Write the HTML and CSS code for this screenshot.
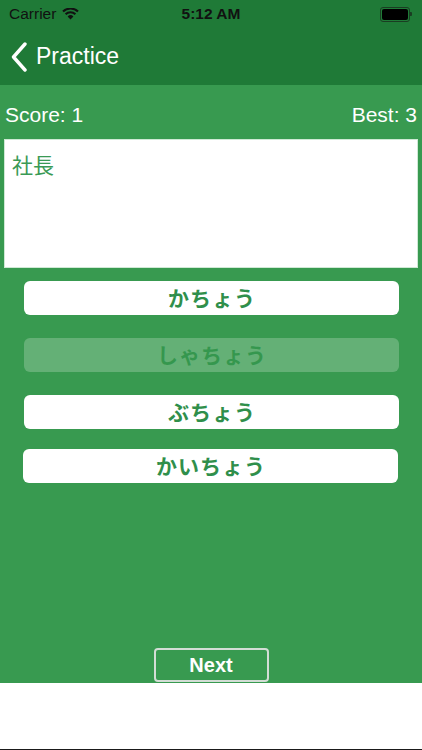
FILE: index.html
```html
<!DOCTYPE html>
<html lang="ja">
<head>
    <meta charset="UTF-8">
    <meta name="viewport" content="width=device-width, initial-scale=1.0">
    <title>Practice</title>
    <link rel="stylesheet" href="styles.css">
</head>
<body>
    <div class="screen">
        <div class="header">
            <div class="status-bar">
                <div class="carrier">
                    Carrier
                    <svg class="wifi" width="17" height="12" viewBox="0 0 17 12">
                        <path d="M8.5 11.5 L5.6 8.4 A4.2 4.2 0 0 1 11.4 8.4 Z" fill="#111"/>
                        <path d="M3.6 6.3 A7 7 0 0 1 13.4 6.3" fill="none" stroke="#111" stroke-width="2.1"/>
                        <path d="M1 3.6 A10.8 10.8 0 0 1 16 3.6" fill="none" stroke="#111" stroke-width="2.1"/>
                    </svg>
                </div>
                <div class="clock">5:12 AM</div>
                <div class="battery">
                    <span class="battery-body"><span class="battery-fill"></span></span>
                    <span class="battery-tip"></span>
                </div>
            </div>
            <div class="nav-bar">
                <svg class="back" width="16" height="30" viewBox="0 0 16 30">
                    <path d="M14 2 L2.5 15 L14 28" fill="none" stroke="#fff" stroke-width="3.4" stroke-linecap="round" stroke-linejoin="round"/>
                </svg>
                <span class="nav-title">Practice</span>
            </div>
        </div>

        <div class="main">
            <div class="score-row">
                <span>Score: 1</span>
                <span>Best: 3</span>
            </div>
            <div class="question">社長</div>
            <div class="answers">
                <button class="answer">かちょう</button>
                <button class="answer used">しゃちょう</button>
                <button class="answer">ぶちょう</button>
                <button class="answer shift">かいちょう</button>
            </div>
            <button class="next-btn">Next</button>
        </div>

        <div class="footer"></div>
    </div>
</body>
</html>
```

FILE: styles.css
```css
body {
    margin: 0;
    font-family: "Liberation Sans", "Noto Sans CJK JP", Arial, sans-serif;
    background-color: #fff;
}
.screen {
    width: 422px;
    height: 750px;
    display: flex;
    flex-direction: column;
    overflow: hidden;
    border-bottom: 1px solid #1a1a1a;
    box-sizing: border-box;
}
.header {
    background-color: #1f7a37;
    height: 85px;
    flex-shrink: 0;
}
.status-bar {
    height: 28px;
    display: flex;
    align-items: center;
    justify-content: space-between;
    padding: 0 10px 0 9px;
    color: #111;
    font-size: 15.5px;
    position: relative;
}
.carrier {
    display: flex;
    align-items: center;
    gap: 6px;
}
.clock {
    font-weight: bold;
    position: absolute;
    left: 0;
    right: 0;
    text-align: center;
}
.battery {
    display: flex;
    align-items: center;
    margin-left: auto;
}
.battery-body {
    width: 26px;
    height: 11px;
    border: 1px solid #1a3d22;
    border-radius: 3px;
    padding: 1px;
    display: flex;
}
.battery-fill {
    flex-grow: 1;
    background-color: #000;
    border-radius: 2px;
}
.battery-tip {
    width: 2px;
    height: 4px;
    background-color: #1a3d22;
    border-radius: 0 1px 1px 0;
}
.nav-bar {
    height: 57px;
    display: flex;
    align-items: center;
    padding-left: 11px;
    color: #fff;
}
.back {
    margin-right: 9px;
}
.nav-title {
    font-size: 23px;
    font-family: "Liberation Sans", Arial, sans-serif;
}
.main {
    flex-grow: 1;
    background-color: #389a50;
    display: flex;
    flex-direction: column;
}
.score-row {
    display: flex;
    justify-content: space-between;
    color: #fff;
    font-size: 21px;
    line-height: 24px;
    padding: 18px 5px 0 5px;
}
.question {
    margin: 12px 4px 0 4px;
    height: 129px;
    box-sizing: border-box;
    background-color: #fff;
    border: 1px solid #cfe9d5;
    color: #3a9a55;
    font-size: 21px;
    font-family: "Noto Sans CJK JP", sans-serif;
    padding: 11px 7px;
    line-height: 26px;
}
.answers {
    display: flex;
    flex-direction: column;
    gap: 23px;
    padding: 13px 23px 0 24px;
}
.answer {
    height: 34px;
    border: none;
    border-radius: 6px;
    background-color: #fff;
    color: #2f8f4b;
    font-size: 21px;
    letter-spacing: 1px;
    font-weight: bold;
    font-family: "Noto Sans CJK JP", sans-serif;
    padding: 0 0 3px 1px;
    line-height: 30px;
}
.answer.used {
    opacity: 0.22;
}
.answer.shift {
    margin-left: -1px;
    margin-right: 1px;
    margin-top: -3px;
}
.next-btn {
    margin: auto auto 1px auto;
    width: 115px;
    height: 34px;
    background-color: #389a50;
    border: 2px solid #d3ddd5;
    border-radius: 4px;
    color: #fff;
    font-size: 20px;
    font-weight: bold;
    font-family: "Liberation Sans", Arial, sans-serif;
    padding: 0;
}
.footer {
    height: 66px;
    flex-shrink: 0;
    background-color: #fff;
}
```
